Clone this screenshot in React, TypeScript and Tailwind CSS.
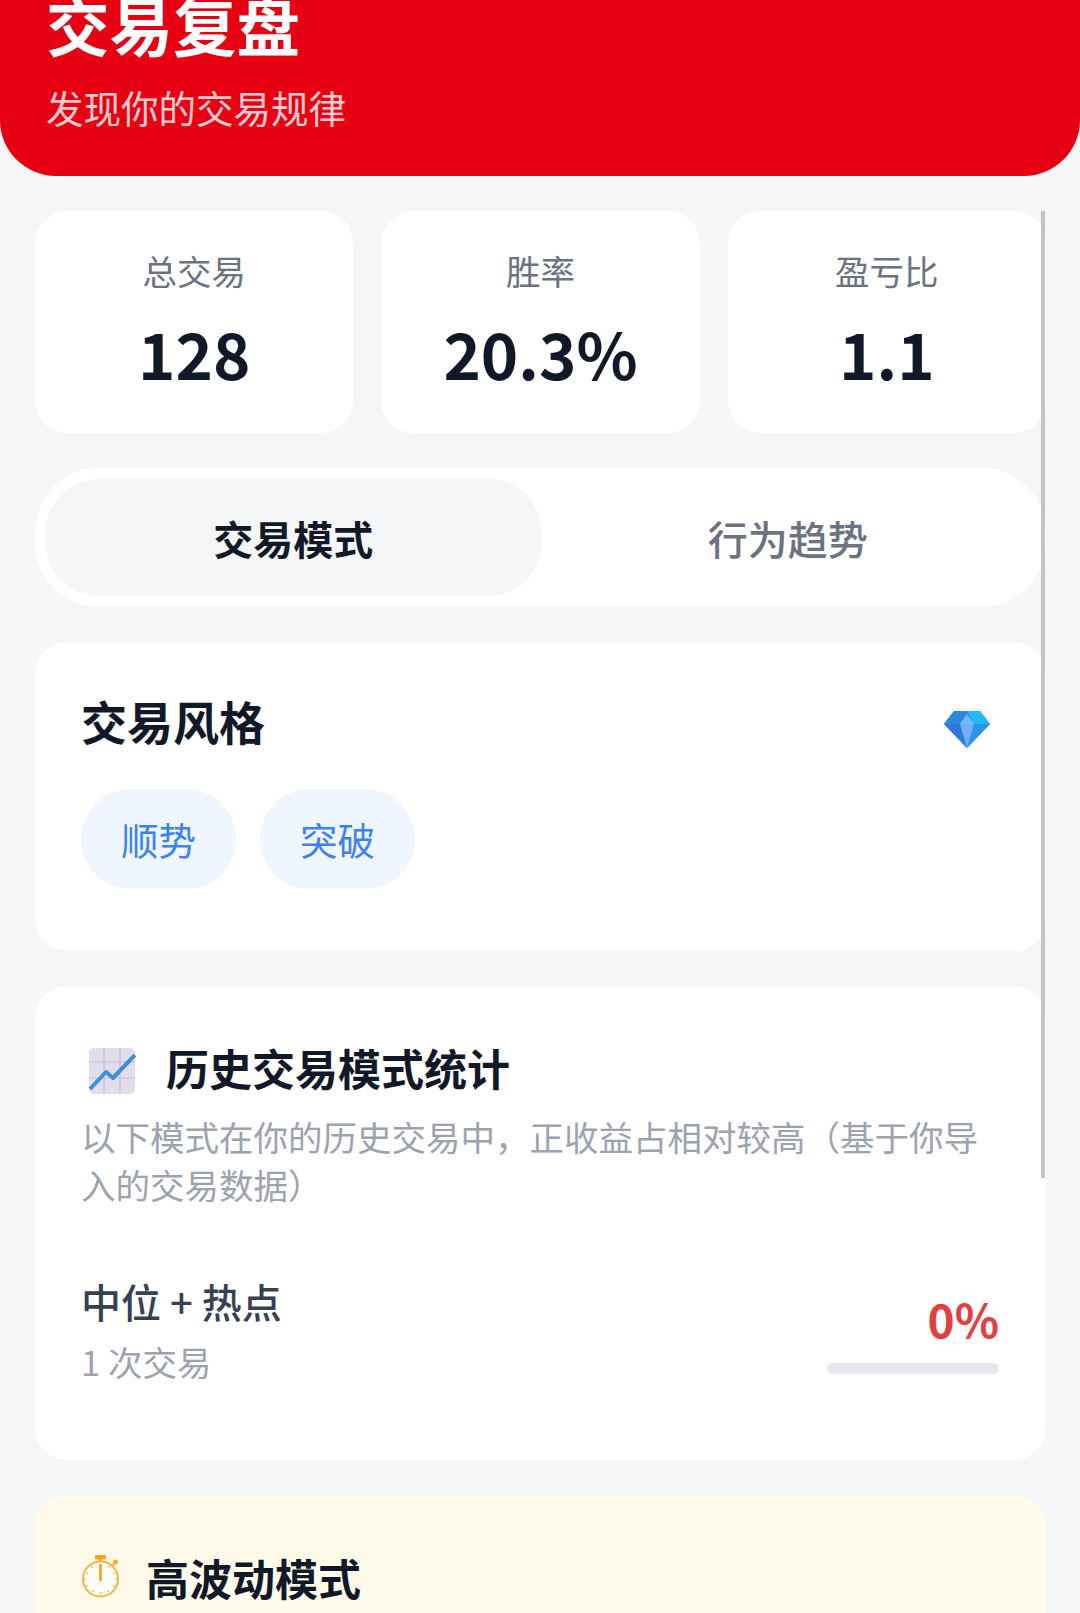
import React from "react";

const Diamond = () => (
  <svg viewBox="0 0 46 37" className="w-[46px] h-[37px]">
    <path d="M10 0H36L46 13L23 37L0 13Z" fill="#2f80e0" />
    <path d="M10 0H23L16 13H0Z" fill="#2f86de" />
    <path d="M23 0H36L46 13H30Z" fill="#20b8f5" />
    <path d="M30 13H46L23 37Z" fill="#2c93ea" />
    <path d="M0 13H16L23 37Z" fill="#2f78dc" />
    <path d="M23 3L30 13L23 37L16 13Z" fill="#74aef7" />
    <path d="M23 3L30 13H16Z" fill="#68bdf9" />
  </svg>
);

const ChartIcon = () => (
  <svg viewBox="0 0 48 48" className="w-[48px] h-[48px]">
    <rect x="1" y="1" width="46" height="46" rx="5" fill="#e3dcec" />
    <path d="M1 15H47M1 31H47M16 1V47M32 1V47" stroke="#c7bdd6" strokeWidth="1.2" fill="none" />
    <path d="M2 42L18 25L25 31L47 8" stroke="#3f8fd8" strokeWidth="4" fill="none" strokeLinejoin="round" />
  </svg>
);

const Stopwatch = () => (
  <svg viewBox="0 0 40 44" className="w-[40px] h-[44px]">
    <path d="M19.5 3V8" stroke="#f5a623" strokeWidth="3" />
    <rect x="14" y="0" width="11" height="4.5" rx="1" fill="#f5a623" />
    <path d="M31 11L34 8" stroke="#f5b042" strokeWidth="2" />
    <circle cx="34.5" cy="7" r="2.6" fill="#f5b042" />
    <circle cx="19.5" cy="24" r="17.5" fill="#fffdf6" stroke="#f3b34a" strokeWidth="2" />
    <path d="M19.5 10V25" stroke="#e8a030" strokeWidth="2.6" strokeLinecap="round" />
    <g fill="#f3b34a">
      <circle cx="28" cy="12" r="0.9" />
      <circle cx="33" cy="18" r="0.9" />
      <circle cx="35" cy="24" r="0.9" />
      <circle cx="33" cy="31" r="0.9" />
      <circle cx="27" cy="36" r="0.9" />
      <circle cx="19.5" cy="38" r="0.9" />
      <circle cx="12" cy="36" r="0.9" />
      <circle cx="6" cy="31" r="0.9" />
      <circle cx="4" cy="24" r="0.9" />
      <circle cx="6" cy="18" r="0.9" />
      <circle cx="11" cy="12" r="0.9" />
    </g>
  </svg>
);

const stats = [
  { label: "总交易", value: "128" },
  { label: "胜率", value: "20.3%" },
  { label: "盈亏比", value: "1.1" },
];

export default function App() {
  return (
    <div className="relative h-[1613px] w-[1080px] overflow-hidden bg-[#f5f6f8] font-['Noto_Sans_CJK_SC','Noto_Sans',sans-serif]">
      <header className="flex h-[176px] flex-col justify-end overflow-hidden rounded-b-[56px] bg-[#e60012] pl-[46px] pr-[48px] pb-[44px]">
        <h1 className="text-[63.5px] font-bold leading-[70px] text-white">交易复盘</h1>
        <p className="mt-[24px] text-[37.5px] leading-[50px] text-white/80">发现你的交易规律</p>
      </header>

      <main className="flex flex-col gap-[35px] pl-[35px] pr-[34px] pt-[35px]">
        <section className="grid grid-cols-3 gap-[28px]">
          {stats.map((s) => (
            <div key={s.label} className="flex h-[222px] flex-col items-center rounded-[32px] bg-white pt-[35px]">
              <span className="text-[34.5px] leading-[48px] text-[#6b7280]">{s.label}</span>
              <span className="mt-[16px] text-[63.5px] font-bold leading-[84px] text-[#111827]">{s.value}</span>
            </div>
          ))}
        </section>

        <section className="flex h-[139px] rounded-[64px] bg-white p-[11px]">
          <div className="flex flex-1 items-center justify-center rounded-[52px] bg-[#f5f6f8] text-[40px] font-semibold text-[#111827]">交易模式</div>
          <div className="flex flex-1 items-center justify-center text-[40px] font-medium text-[#6b7280]">行为趋势</div>
        </section>

        <section className="h-[309px] rounded-[32px] bg-white pl-[46px] pr-[47px] pt-[46px]">
          <div className="flex items-center justify-between pr-[9px]">
            <h2 className="text-[46px] font-bold leading-[64px] text-[#111827]">交易风格</h2>
            <div className="mt-[18px]">
              <Diamond />
            </div>
          </div>
          <div className="mt-[37px] flex gap-[24px]">
            <span className="flex h-[100px] w-[155px] items-center justify-center rounded-[50px] bg-[#eff6ff] text-[37.5px] text-[#3b82f6]">顺势</span>
            <span className="flex h-[100px] w-[155px] items-center justify-center rounded-[50px] bg-[#eff6ff] text-[37.5px] text-[#3b82f6]">突破</span>
          </div>
        </section>

        <section className="h-[474px] rounded-[32px] bg-white pl-[46px] pr-[47px] pt-[51px]">
          <div className="flex items-start gap-[30px] pl-[7px]">
            <div className="mt-[10px]">
              <ChartIcon />
            </div>
            <h2 className="text-[43px] font-bold leading-[60px] text-[#111827]">历史交易模式统计</h2>
          </div>
          <p className="mt-[15px] text-[34.5px] leading-[48px] text-[#9ca3af]">以下模式在你的历史交易中，正收益占相对较高（基于你导入的交易数据）</p>
          <div className="mt-[65px] flex items-start justify-between">
            <div>
              <div className="text-[40px] font-medium leading-[56px] text-[#374151]">中位 + 热点</div>
              <div className="mt-[7px] text-[34.5px] leading-[50px] text-[#9ca3af]">1 次交易</div>
            </div>
            <div className="flex flex-col items-end pt-[13px]">
              <span className="text-[46px] font-bold leading-[64px] text-[#e53e3e]">0%</span>
              <div className="mt-[13px] h-[11px] w-[172px] rounded-full bg-[#e5e7eb]" />
            </div>
          </div>
        </section>

        <section className="h-[300px] rounded-[32px] bg-[#fffbeb] pl-[46px] pr-[47px] pt-[52px]">
          <div className="flex items-center gap-[25px]">
            <Stopwatch />
            <h2 className="text-[43px] font-bold leading-[60px] text-[#111827]">高波动模式</h2>
          </div>
        </section>
      </main>

      <div className="absolute left-[1041px] top-[211px] h-[967px] w-[4px] bg-[#c4c4c4]" />
    </div>
  );
}
